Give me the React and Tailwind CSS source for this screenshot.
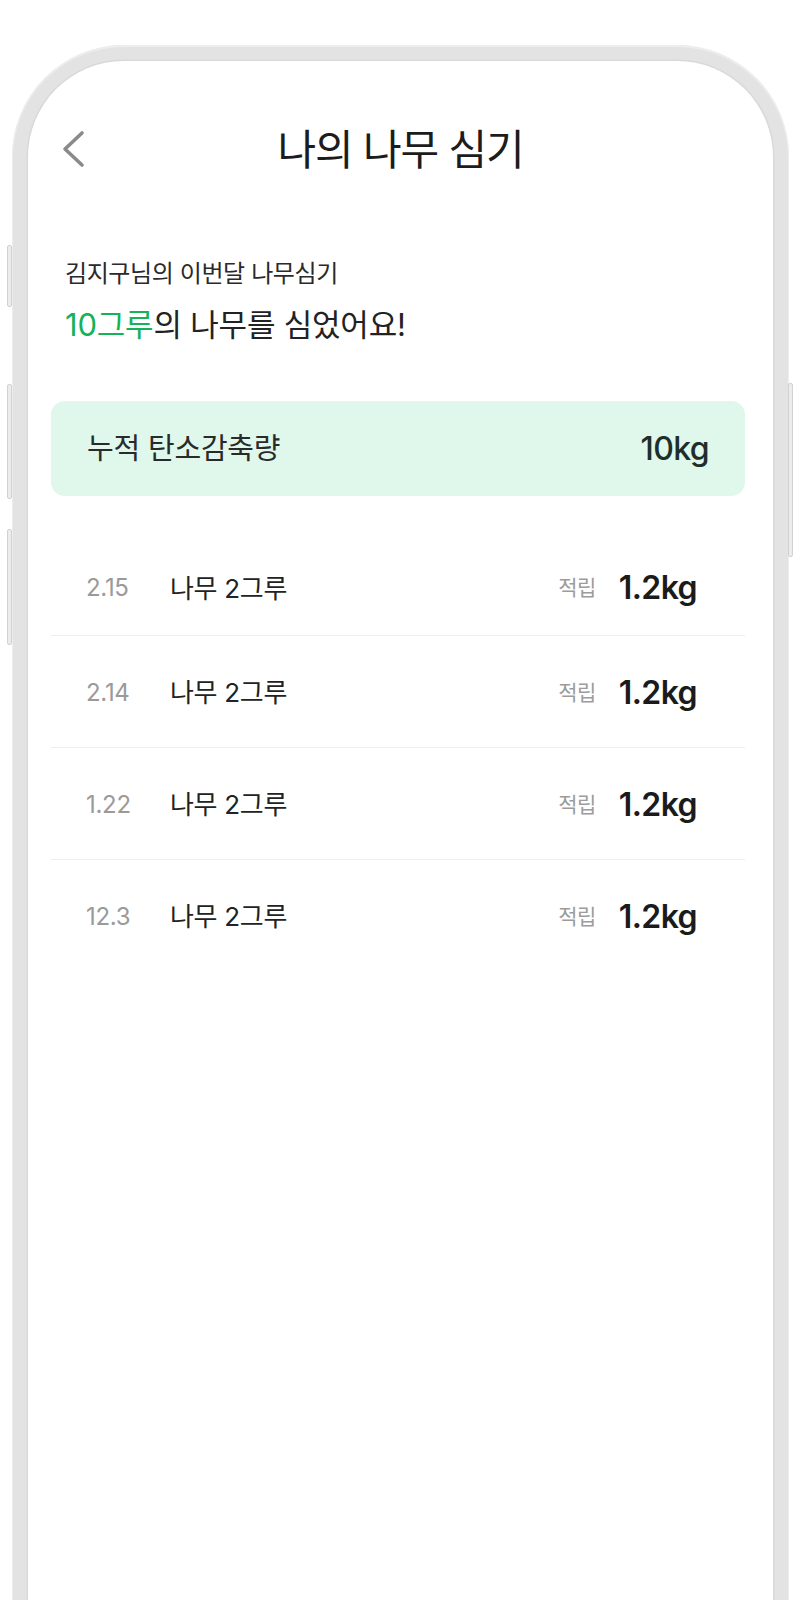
const records = [
  { date: '2.15', label: '나무 2그루', amount: '1.2kg' },
  { date: '2.14', label: '나무 2그루', amount: '1.2kg' },
  { date: '1.22', label: '나무 2그루', amount: '1.2kg' },
  { date: '12.3', label: '나무 2그루', amount: '1.2kg' },
];

const font = { fontFamily: '"Inter", "Noto Sans CJK KR", sans-serif' };

function SideButton({ className }) {
  return (
    <div
      className={`absolute w-[5px] rounded-[2px] bg-[#ececec] border border-[#d2d2d2] ${className}`}
    />
  );
}

function BackIcon() {
  return (
    <svg
      className="absolute left-[33px] top-[10px]"
      width="26"
      height="40"
      viewBox="0 0 26 40"
      fill="none"
    >
      <path
        d="M21 4 L4 20 L21 36"
        stroke="#8a8a8a"
        strokeWidth="3.6"
        strokeLinecap="round"
        strokeLinejoin="round"
      />
    </svg>
  );
}

function RecordRow({ record, first }) {
  return (
    <div
      className={`flex items-center pl-[35px] pr-[48px] ${
        first ? 'h-[104px] pt-[10px]' : 'h-[112px] border-t border-[#eeeeee] pt-[2px]'
      }`}
    >
      <span className="w-[84px] text-[24px] tracking-[-0.3px] text-[#9a9a9a]">{record.date}</span>
      <span className="text-[26px] tracking-[-0.3px] text-[#222]">{record.label}</span>
      <span className="ml-auto text-[21px] tracking-[-0.5px] text-[#9c9c9c]">적립</span>
      <span className="ml-[23px] text-[32px] font-semibold tracking-[-0.6px] text-[#1b1b1b]">
        {record.amount}
      </span>
    </div>
  );
}

export default function App() {
  return (
    <div className="relative w-[800px] h-[1600px] overflow-hidden bg-white" style={font}>
      <SideButton className="left-[7px] top-[245px] h-[62px]" />
      <SideButton className="left-[7px] top-[384px] h-[115px]" />
      <SideButton className="left-[7px] top-[529px] h-[116px]" />
      <SideButton className="left-[788px] top-[383px] h-[174px]" />

      <div className="ml-[12px] mt-[45px] w-[777px] h-[1600px] rounded-t-[112px] bg-[#e3e3e3] px-[16px] pt-[16px] shadow-[inset_0_1px_0_1px_#ededed]">
        <div className="h-full rounded-t-[96px] bg-white shadow-[0_0_0_1.5px_#d9d9d9]">
          <div className="pt-[58px]">
            <div className="relative flex h-[60px] items-center justify-center">
              <BackIcon />
              <h1 className="text-[42px] tracking-[-1.2px] text-[#1c1c1c]">나의 나무 심기</h1>
            </div>
          </div>

          <div className="pl-[23px] pr-[28px]">
            <div className="mt-[80px] pl-[14px]">
              <p className="text-[24px] tracking-[-0.4px] text-[#2a2a2a] leading-[30px]">
                김지구님의 이번달 나무심기
              </p>
              <p className="mt-[17px] text-[31px] tracking-[-0.2px] text-[#222] leading-[38px]">
                <span className="text-[#15b257]">10그루</span>의 나무를 심었어요!
              </p>
            </div>

            <div className="mt-[57px] flex h-[95px] items-center justify-between rounded-[14px] bg-[#e0f7eb] pl-[36px] pr-[36px]">
              <span className="text-[29px] tracking-[-0.2px] text-[#2a2a2a]">누적 탄소감축량</span>
              <span className="text-[32px] font-medium tracking-[-0.6px] text-[#1e2e2a]">10kg</span>
            </div>

            <div className="mt-[35px]">
              {records.map((r, i) => (
                <RecordRow key={r.date} record={r} first={i === 0} />
              ))}
            </div>
          </div>
        </div>
      </div>
    </div>
  );
}
